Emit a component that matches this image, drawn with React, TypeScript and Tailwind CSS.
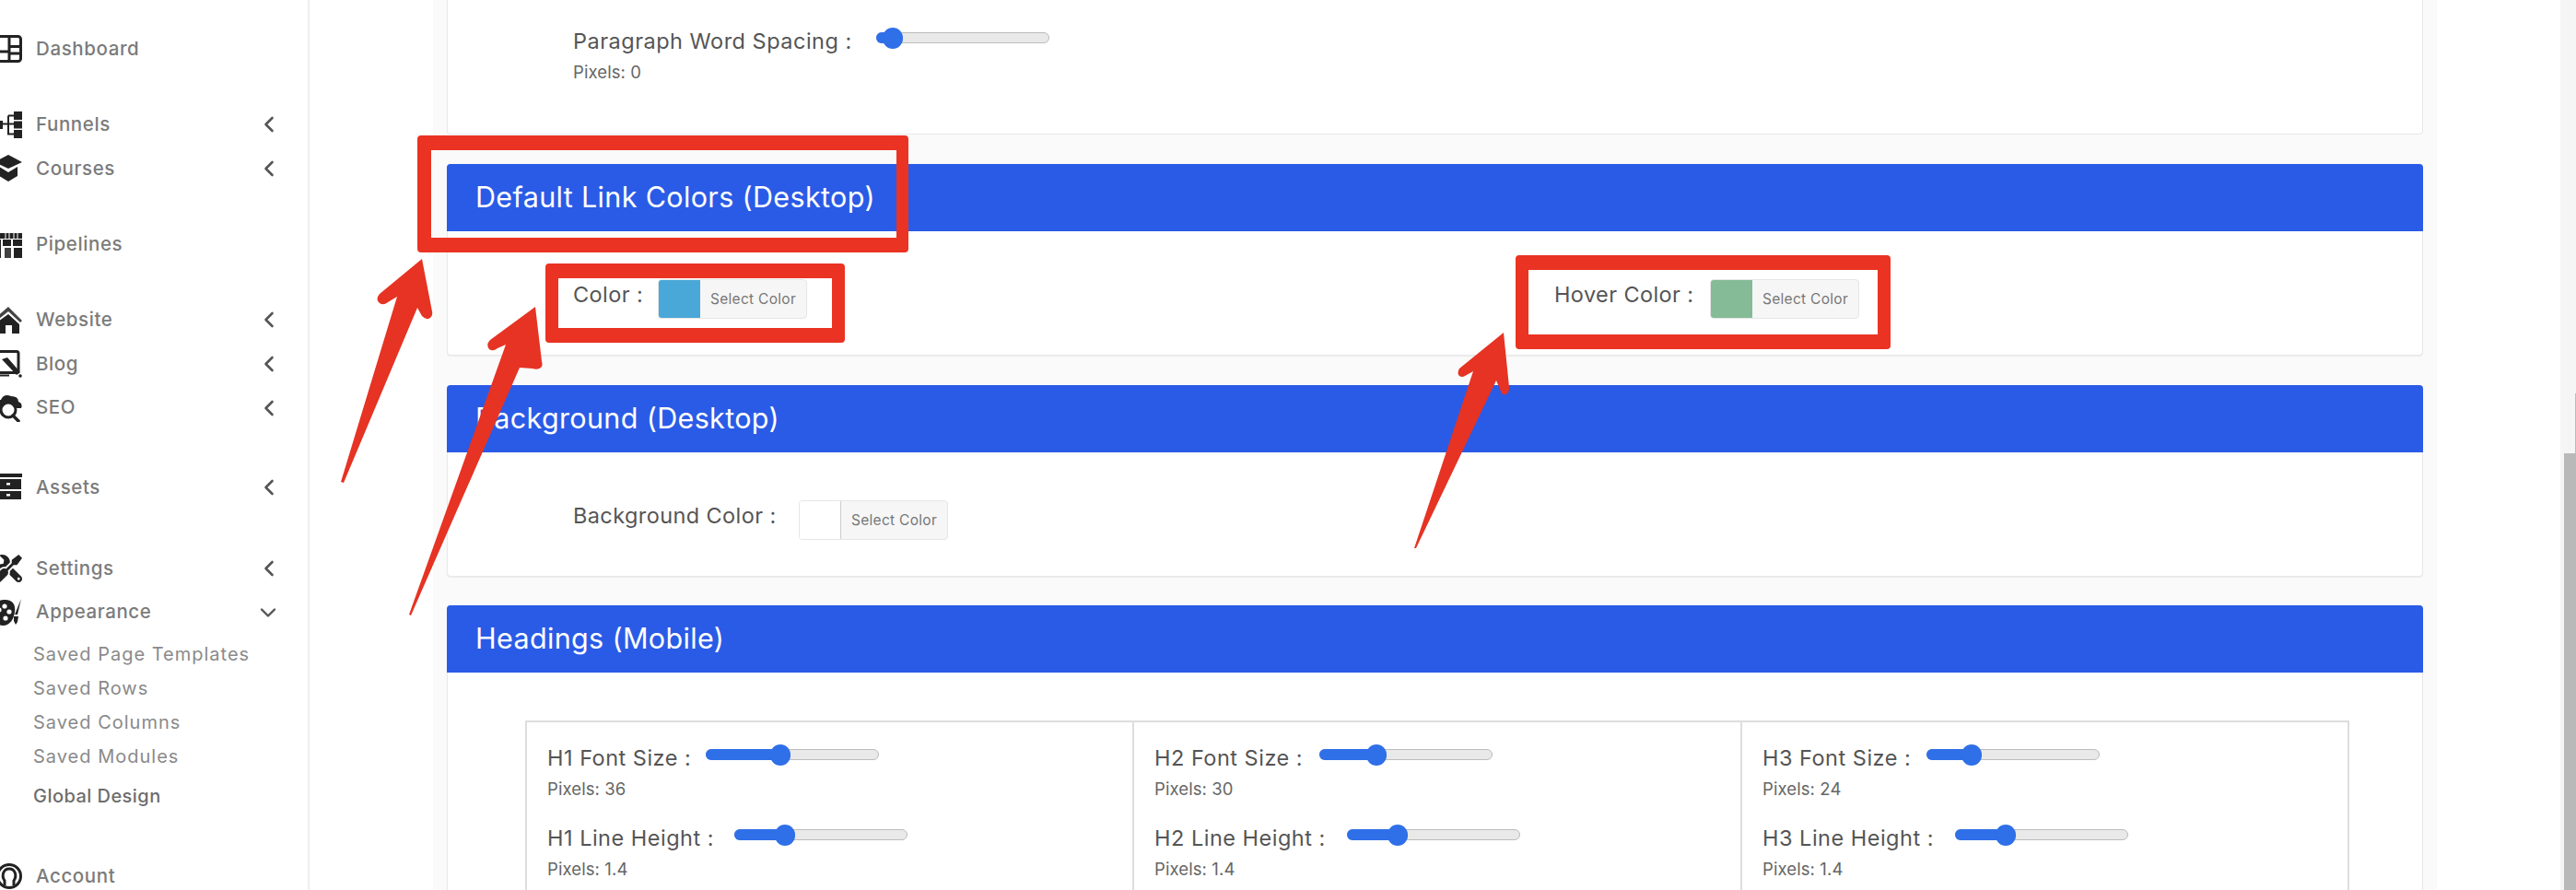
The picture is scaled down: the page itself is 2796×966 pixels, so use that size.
import React from "react";
import { FaTools } from "react-icons/fa";

const font = "[font-family:Inter,'Noto_Sans',sans-serif]";

function Chevron({ down }: { down?: boolean }) {
  return down ? (
    <svg width="18" height="12" viewBox="0 0 18 12" className="ml-[-4px]">
      <path d="M2 2.5 L9 9.5 L16 2.5" fill="none" stroke="#555" strokeWidth="2.4" strokeLinecap="round" strokeLinejoin="round" />
    </svg>
  ) : (
    <svg width="12" height="18" viewBox="0 0 12 18">
      <path d="M9.5 2 L2.5 9 L9.5 16" fill="none" stroke="#555" strokeWidth="2.6" strokeLinecap="round" strokeLinejoin="round" />
    </svg>
  );
}

function Icon({ name }: { name: string }) {
  const c = "#222";
  let body: React.ReactNode = null;
  if (name === "dashboard")
    body = (
      <g fill="none" stroke={c} strokeWidth="3">
        <rect x="-8" y="1.5" width="30.5" height="27" rx="3" />
        <path d="M10 1.5V28.5M10 12.5H22.5M-8 18H10M10 20H22.5" />
      </g>
    );
  if (name === "funnels")
    body = (
      <g fill={c}>
        <rect x="-6" y="11" width="9" height="9" />
        <rect x="15" y="1" width="9" height="9" />
        <rect x="15" y="11.5" width="9" height="8" />
        <rect x="15" y="21" width="9" height="9" />
        <path d="M3 14.5H15M9 5.5V25.5H15M9 5.5H15" fill="none" stroke={c} strokeWidth="2" />
      </g>
    );
  if (name === "courses")
    body = (
      <g fill={c}>
        <path d="M9 0 L24 8 L9 15 L-6 8Z" />
        <path d="M-1 13 L9 19 L19 13 V23 L9 29 L-1 23Z" />
      </g>
    );
  if (name === "pipelines")
    body = (
      <g fill={c}>
        <rect x="-6" y="3" width="30" height="6" />
        <rect x="-6" y="10" width="7" height="21" />
        <rect x="3" y="10" width="9" height="7" />
        <rect x="14" y="10" width="10" height="7" />
        <rect x="5" y="19" width="7" height="12" opacity="0.85" />
        <rect x="15" y="19" width="9" height="12" />
        <path d="M6 3V9M10 3V9M15 3V9M19 3V9" stroke="#fff" strokeWidth="1" />
      </g>
    );
  if (name === "website")
    body = (
      <g>
        <path d="M9 1 L24 16 L22 18 L9 6 L-6 18 L-6 14Z" fill="#444" />
        <path d="M9 9 L21 20 V30 H13 V21 H6 V30 H-6 V20Z" fill={c} />
      </g>
    );
  if (name === "blog")
    body = (
      <g>
        <rect x="-6" y="1.5" width="26" height="23" rx="2" fill="none" stroke={c} strokeWidth="3" />
        <path d="M2 10 L8 8 L22 24 L18 27Z" fill={c} />
        <circle cx="22" cy="28" r="1.8" fill={c} />
        <path d="M-6 27.5H10" stroke={c} strokeWidth="2" />
      </g>
    );
  if (name === "seo")
    body = (
      <g>
        <path d="M-4 13 Q-6 6 1 6 Q4 -1 12 2 Q20 2 20 8 Q25 10 23 15 L19 15 L4 15Z" fill={c} />
        <circle cx="9" cy="17" r="8" fill="#fff" stroke={c} strokeWidth="3" />
        <path d="M14 23 L20 29" stroke={c} strokeWidth="3.4" strokeLinecap="round" />
      </g>
    );
  if (name === "assets")
    body = (
      <g fill={c}>
        <rect x="-6" y="0" width="30" height="4" />
        <rect x="-6" y="6" width="29" height="11" />
        <rect x="-6" y="19" width="29" height="9" />
        <rect x="7" y="10" width="4" height="2.5" fill="#fff" />
        <rect x="7" y="22" width="4" height="2.5" fill="#fff" />
      </g>
    );
  if (name === "appearance")
    body = (
      <g>
        <path d="M4 1 C15 0 17 8 16 14 C15 22 11 29 3 29 C-4 29 -8 22 -8 15 C-8 7 -3 1 4 1Z" fill={c} />
        <circle cx="5" cy="8" r="2.6" fill="#fff" />
        <circle cx="10" cy="14" r="2.6" fill="#fff" />
        <circle cx="-1" cy="12" r="2.6" fill="#fff" />
        <circle cx="6" cy="21" r="2.6" fill="#fff" />
        <path d="M23 0 L19 17 L16 17Z" fill={c} />
        <path d="M15 19 H20 L19 25 L17 28 L15 24Z" fill={c} />
      </g>
    );
  if (name === "account")
    body = (
      <g fill="none" stroke={c}>
        <circle cx="10" cy="15" r="12.5" strokeWidth="3" />
        <path d="M5 25 V20 C1 14 4 7 10 7 C16 7 19 14 15 20 V25" strokeWidth="3" />
      </g>
    );
  if (name === "settings")
    return (
      <span className="-ml-[6px] block h-[30px] w-[30px] -scale-x-100 text-[#222]">
        <FaTools size={30} />
      </span>
    );
  return (
    <svg width="30" height="30" viewBox="-6 0 30 30" className="-ml-[6px] shrink-0">
      {body}
    </svg>
  );
}

function Nav({ icon, label, chev, cls }: { icon: string; label: string; chev?: "l" | "d"; cls: string }) {
  return (
    <div className={`flex items-center ${cls}`}>
      <div className="w-[39px] shrink-0">
        <Icon name={icon} />
      </div>
      <span className="w-[247px] shrink-0 text-[20.5px] font-medium tracking-[0.6px] text-[#7b7b7b]">{label}</span>
      {chev === "l" && <Chevron />}
      {chev === "d" && <Chevron down />}
    </div>
  );
}

function Sub({ label, cls }: { label: string; cls: string }) {
  return <div className={`flex items-center pl-[36px] text-[20px] tracking-[1px] text-[#8a8a8a] ${cls}`}>{label}</div>;
}

function Sidebar() {
  return (
    <aside className="h-full w-[336px] shrink-0 overflow-hidden border-r-2 border-[#eeeeee] bg-white pt-[29px]">
      <Nav icon="dashboard" label="Dashboard" cls="h-[48px]" />
      <Nav icon="funnels" label="Funnels" chev="l" cls="mt-[34px] h-[48px]" />
      <Nav icon="courses" label="Courses" chev="l" cls="h-[48px]" />
      <Nav icon="pipelines" label="Pipelines" cls="mt-[34px] h-[48px]" />
      <Nav icon="website" label="Website" chev="l" cls="mt-[34px] h-[48px]" />
      <Nav icon="blog" label="Blog" chev="l" cls="h-[48px]" />
      <Nav icon="seo" label="SEO" chev="l" cls="h-[47px]" />
      <Nav icon="assets" label="Assets" chev="l" cls="mt-[39px] h-[48px]" />
      <Nav icon="settings" label="Settings" chev="l" cls="mt-[40px] h-[48px]" />
      <Nav icon="appearance" label="Appearance" chev="d" cls="h-[47px]" />
      <Sub label="Saved Page Templates" cls="mt-[3px] h-[37px]" />
      <Sub label="Saved Rows" cls="h-[37px]" />
      <Sub label="Saved Columns" cls="h-[37px]" />
      <Sub label="Saved Modules" cls="h-[37px]" />
      <div className="mt-[6px] flex h-[37px] items-center pl-[36px] text-[20px] font-medium tracking-[0.45px] text-[#6d6d6d]">Global Design</div>
      <Nav icon="account" label="Account" cls="mt-[45px] h-[48px]" />
    </aside>
  );
}

function Slider({ pct }: { pct: number }) {
  return (
    <div className="relative mt-[4px] h-[12px] w-[188px] shrink-0 rounded-full border border-[#bcbcbc] bg-[#e9e9e9]">
      <div className="absolute -inset-y-px -left-px rounded-full bg-[#2f6fe8]" style={{ width: `${pct}%` }} />
      <div className="absolute top-[-6px] h-[23px] w-[22px] -translate-x-1/2 rounded-full bg-[#2f6fe8]" style={{ left: `${pct}%` }} />
    </div>
  );
}

function Setting({ label, w, pct, value, cls }: { label: string; w: string; pct: number; value: string; cls?: string }) {
  return (
    <div className={cls}>
      <div className="flex items-start">
        <div className={`${w} h-[28px] shrink-0 whitespace-nowrap text-[23.5px] leading-[28px] tracking-[0.5px] text-[#555]`}>{label}</div>
        <Slider pct={pct} />
      </div>
      <div className="mt-[9px] h-[20px] text-[18.5px] leading-[20px] tracking-[0.1px] text-[#666]">{value}</div>
    </div>
  );
}

function ColorPick({ label, w, color }: { label: string; w: string; color?: string }) {
  return (
    <div className="flex items-start">
      <div className={`${w} mt-[3px] h-[28px] shrink-0 whitespace-nowrap text-[23.5px] leading-[28px] tracking-[0.4px] text-[#555]`}>{label}</div>
      <div className="flex h-[43px] w-[162px] overflow-hidden rounded-[4px] border border-[#e6e6e6] bg-[#f6f6f6]">
        {color ? (
          <div className="w-[45px] shrink-0" style={{ background: color }} />
        ) : (
          <div className="w-[45px] shrink-0 border-r border-[#cccccc] bg-white" />
        )}
        <div className="flex flex-1 items-center justify-center pt-[1px] text-[15.5px] tracking-[0.3px] text-[#777]">Select Color</div>
      </div>
    </div>
  );
}

function Card({ title, cls, children }: { title: string; cls: string; children: React.ReactNode }) {
  return (
    <section className={`rounded-[4px] border border-[#e8e8e8] bg-white shadow-[0_1px_1px_rgba(0,0,0,0.06)] ${cls}`}>
      <header className="-mx-px -mt-px flex h-[73px] items-center rounded-t-[4px] bg-[#2a5be6] pb-[2px] pl-[31px] text-[30.5px] tracking-[0.35px] text-white">{title}</header>
      {children}
    </section>
  );
}

function Cell({ n, rows, cls }: { n: string; rows: { w: string; pct: number; v: string }[]; cls: string }) {
  return (
    <div className={`pl-[22px] pt-[25px] ${cls}`}>
      <Setting label={`H${n} Font Size :`} w={rows[0].w} pct={rows[0].pct} value={rows[0].v} />
      <Setting cls="mt-[30px]" label={`H${n} Line Height :`} w={rows[1].w} pct={rows[1].pct} value={rows[1].v} />
    </div>
  );
}

function Main() {
  return (
    <main className="h-full w-[2443px] shrink-0 overflow-hidden bg-white pl-[134px]">
      <div className="h-full w-[2175px] bg-[#fafafa] pl-[15px]">
        <section className="mb-[32px] h-[146px] w-[2145px] rounded-b-[4px] border border-t-0 border-[#e8e8e8] bg-white pl-[136px] pt-[31px]">
          <Setting label="Paragraph Word Spacing :" w="w-[329px]" pct={9} value="Pixels: 0" />
        </section>

        <Card title="Default Link Colors (Desktop)" cls="mb-[32px] h-[208px] w-[2145px]">
          <div className="grid grid-cols-[1065px_1fr] pl-[136px] pt-[52px]">
            <ColorPick label="Color :" w="w-[92px]" color="#4aa8d8" />
            <ColorPick label="Hover Color :" w="w-[169px]" color="#85bb96" />
          </div>
        </Card>

        <Card title="Background (Desktop)" cls="mb-[31px] h-[208px] w-[2145px]">
          <div className="pl-[136px] pt-[52px]">
            <ColorPick label="Background Color :" w="w-[245px]" />
          </div>
        </Card>

        <Card title="Headings (Mobile)" cls="h-[500px] w-[2145px]">
          <div className="ml-[84px] mt-[52px] grid h-[400px] w-[1980px] grid-cols-[659px_660px_1fr] border-2 border-[#dddddd]">
            <Cell
              n="1"
              cls="border-r-2 border-[#dddddd]"
              rows={[
                { w: "w-[172px]", pct: 43, v: "Pixels: 36" },
                { w: "w-[203px]", pct: 29, v: "Pixels: 1.4" },
              ]}
            />
            <Cell
              n="2"
              cls="border-r-2 border-[#dddddd]"
              rows={[
                { w: "w-[179px]", pct: 33, v: "Pixels: 30" },
                { w: "w-[209px]", pct: 29, v: "Pixels: 1.4" },
              ]}
            />
            <Cell
              n="3"
              cls=""
              rows={[
                { w: "w-[178px]", pct: 26, v: "Pixels: 24" },
                { w: "w-[209px]", pct: 29, v: "Pixels: 1.4" },
              ]}
            />
          </div>
        </Card>
      </div>
    </main>
  );
}

function Annotations() {
  return (
    <>
      <div className="absolute left-[453px] top-[147px] h-[127px] w-[533px] rounded-[4px] border-y-[16px] border-l-[15px] border-r-[13px] border-[#ea3323]" />
      <div className="absolute left-[592px] top-[286px] h-[86px] w-[325px] rounded-[4px] border-x-[14px] border-y-[16px] border-[#ea3323]" />
      <div className="absolute left-[1645px] top-[277px] h-[102px] w-[407px] rounded-[4px] border-x-[14px] border-y-[16px] border-[#ea3323]" />
      <svg className="pointer-events-none absolute left-0 top-0" width="2796" height="966" viewBox="0 0 2796 966">
        <path d="M458 281 L412 319 Q407 325 412 329 Q416 332 421 328 L431 322 L370 523 L373 524 L453 334 L458 343 Q463 348 467 345 Q470 342 469 338 Z" fill="#e63323" />
        <path d="M581 333 L532 369 Q527 374 531 379 Q535 382 540 378 L549 374 L444 667 L446 668 L564 399 L578 400 Q585 402 588 398 Q589 396 588 392 Z" fill="#e63323" />
        <path d="M1632 361 L1584 400 Q1581 405 1584 408 Q1587 410 1590 408 L1599 403 L1535 595 L1537 595 L1624 413 L1630 427 Q1634 430 1637 426 Q1638 424 1638 420 Z" fill="#e63323" />
      </svg>
    </>
  );
}

export default function App() {
  return (
    <div className={`relative flex h-[966px] w-[2796px] overflow-hidden bg-white ${font}`}>
      <Sidebar />
      <Main />
      <div className="flex h-full flex-1 flex-col items-end bg-[#f5f5f5] pt-[427px]">
        <div className="h-[65px] w-px shrink-0 bg-[#bbbbbb]" />
        <div className="w-[13px] flex-1 bg-[#b9b9b9]" />
      </div>
      <Annotations />
    </div>
  );
}
